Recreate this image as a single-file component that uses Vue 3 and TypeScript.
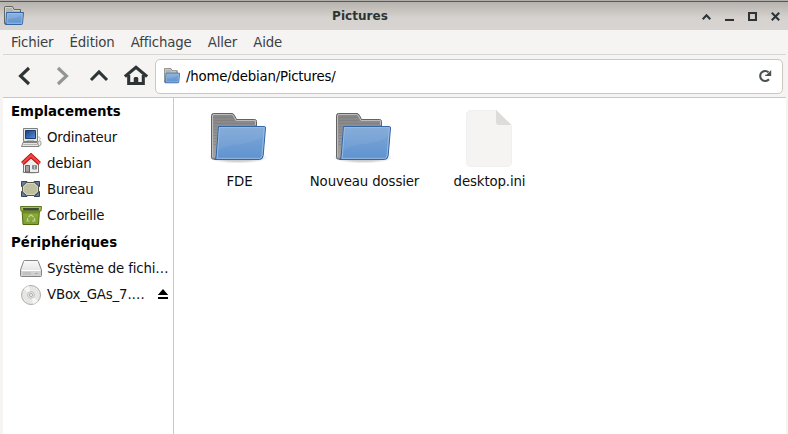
<script setup lang="ts">
interface Place {
  label: string
  icon: string
  eject?: boolean
}

const menus: string[] = ['Fichier', 'Édition', 'Affichage', 'Aller', 'Aide']

const groups: { title: string; places: Place[] }[] = [
  {
    title: 'Emplacements',
    places: [
      { label: 'Ordinateur', icon: 'computer' },
      { label: 'debian', icon: 'home' },
      { label: 'Bureau', icon: 'desktop' },
      { label: 'Corbeille', icon: 'trash' },
    ],
  },
  {
    title: 'Périphériques',
    places: [
      { label: 'Système de fichi…', icon: 'drive' },
      { label: 'VBox_GAs_7.…', icon: 'disc', eject: true },
    ],
  },
]

const files: { name: string; kind: 'folder' | 'text' }[] = [
  { name: 'FDE', kind: 'folder' },
  { name: 'Nouveau dossier', kind: 'folder' },
  { name: 'desktop.ini', kind: 'text' },
]
</script>

<template>
  <div class="window">
    <svg class="defs" width="0" height="0" aria-hidden="true">
      <defs>
        <linearGradient id="blue" x1="0" y1="0" x2="0" y2="1">
          <stop offset="0" stop-color="#7fa8d8" />
          <stop offset="1" stop-color="#5f93cf" />
        </linearGradient>
        <linearGradient id="grey" x1="0" y1="0" x2="0" y2="1">
          <stop offset="0" stop-color="#858585" />
          <stop offset="1" stop-color="#a2a2a2" />
        </linearGradient>
        <linearGradient id="screen" x1="0" y1="0" x2="1" y2="1">
          <stop offset="0" stop-color="#153e84" />
          <stop offset="1" stop-color="#5c8fd6" />
        </linearGradient>
        <linearGradient id="green" x1="0" y1="0" x2="0" y2="1">
          <stop offset="0" stop-color="#8fae35" />
          <stop offset="1" stop-color="#7f9f38" />
        </linearGradient>
        <linearGradient id="steel" x1="0" y1="0" x2="0" y2="1">
          <stop offset="0" stop-color="#fafafa" />
          <stop offset="1" stop-color="#dadada" />
        </linearGradient>
        <radialGradient id="shade">
          <stop offset="0.6" stop-color="#000" stop-opacity="0.2" />
          <stop offset="1" stop-color="#000" stop-opacity="0" />
        </radialGradient>
        <symbol id="folder-small" viewBox="0 0 20 20">
          <path d="M.5 17.500V1.500Q.5.500 1.500.500H8.500L10 3.500H16.500V7V17.500Z" fill="#b3b3b1" stroke="#65655f" />
          <path d="M1.500 16V1.500H8L9.500 4.500H15.500" fill="none" stroke="#d2d2cf" />
          <path d="M2.500 6.500H19.500L18.500 17.500Q18.500 18.500 17.500 18.500H1.200Q2 18 2 17Z" fill="url(#blue)" stroke="#3465a4" />
          <path d="M3.500 7.500H18.400L17.600 17.300H2.900Z" fill="none" stroke="#a8c8ea" stroke-opacity=".65" />
          <path d="M4 13Q10 13 18 9V8H4Z" fill="#fff" opacity=".12" />
        </symbol>
      </defs>
    </svg>

    <header class="titlebar">
      <svg class="app-icon" viewBox="0 0 20 20"><use href="#folder-small" /></svg>
      <span class="title">Pictures</span>
      <div class="controls">
        <svg viewBox="0 0 9 9"><path d="M.7 7.200 4.500 3.200 8.300 7.200" /></svg>
        <svg viewBox="0 0 9 9"><path d="M0 8H9" /></svg>
        <svg viewBox="0 0 9 9"><path d="M1 1H8V8H1Z" /></svg>
        <svg viewBox="0 0 9 9"><path d="M.8.8 8.200 8.200M8.200.8.8 8.200" /></svg>
      </div>
    </header>

    <nav class="menubar">
      <span v-for="menu in menus" :key="menu">{{ menu }}</span>
    </nav>

    <div class="toolbar">
      <div class="nav">
        <svg class="back" viewBox="0 0 24 24"><path d="M16 4 7.500 12 16 20" /></svg>
        <svg class="forward" viewBox="0 0 24 24"><path d="M8 4 16.500 12 8 20" /></svg>
        <svg class="up" viewBox="0 0 24 24"><path d="M4 16 12 8 20 16" /></svg>
        <svg class="house" viewBox="0 0 24 24">
          <path d="M.9 12.500 12 3.200 23.100 12.500" />
          <path d="M4.700 11V19.500H19.300V11" />
          <path class="door" d="M9.700 20V14.500Q9.700 13 11 13H13Q14.300 13 14.300 14.500V20Z" />
        </svg>
      </div>
      <div class="address">
        <svg class="address-icon" viewBox="0 0 20 20"><use href="#folder-small" /></svg>
        <span class="path">/home/debian/Pictures/</span>
        <svg class="reload" viewBox="0 0 14 14">
          <path d="M11 10.200A5 5 0 1 1 10.500 3.200" fill="none" stroke="#4b5052" stroke-width="2.100" />
          <path d="M13.200 1V7H7.200V5.800H8.500Z" fill="#4b5052" />
        </svg>
      </div>
    </div>

    <div class="content">
      <aside class="sidebar">
        <section v-for="group in groups" :key="group.title">
          <h2>{{ group.title }}</h2>
          <div v-for="place in group.places" :key="place.label" class="place">
            <svg v-if="place.icon === 'computer'" class="place-icon" viewBox="0 0 22 22">
              <path d="M3 16.500H17.500L19 20.500H1.500Z" fill="#e7e7e2" stroke="#85857f" />
              <path d="M3.500 18.500H17" stroke="#aaa" stroke-width=".8" />
              <path d="M3.500 2.500H17.500V15.500H3.500Z" fill="#e6e6e0" stroke="#80807b" />
              <path d="M5.500 4.500H15.500V12.500H5.500Z" fill="url(#screen)" stroke="#183b73" />
              <path d="M7 14.500H14" stroke="#bbb" />
              <path d="M18 11Q21.500 11 19.500 14.500" fill="none" stroke="#b0b0aa" />
              <rect x="18" y="15" width="3" height="4.500" rx="1.500" fill="#eee" stroke="#999" />
            </svg>
            <svg v-else-if="place.icon === 'home'" class="place-icon" viewBox="0 0 22 22">
              <ellipse cx="11" cy="20" rx="10" ry="2" fill="url(#shade)" />
              <path d="M3.500 10 11 3.500 18.500 10V20.500H3.500Z" fill="#eeeeec" stroke="#777" />
              <path d="M5.500 13.500H9.500V20H5.500Z" fill="#a2a2a0" stroke="#62625f" />
              <path d="M12.500 13.500H16.500V17H12.500Z" fill="#6b91c5" stroke="#8a8a88" />
              <path d="M14.500 13.500V17" stroke="#ddd" stroke-width=".7" />
              <path d="M2.500 11.500 11 3.700 19.500 11.500" fill="none" stroke="#b50000" stroke-width="4.200" />
              <path d="M2.500 11.300 11 3.500 19.500 11.300" fill="none" stroke="#ef4545" stroke-width="2.400" />
            </svg>
            <svg v-else-if="place.icon === 'desktop'" class="place-icon" viewBox="0 0 22 22">
              <path d="M1.500 3.500H7L5 6.500 1.500 8.500ZM14 3.500H19.500V8.500L17 6.500ZM1.500 13.500 5 16 7 18.500H1.500ZM19.500 13.500V18.500H14L17 16Z" fill="#647da3" stroke="#34445f" />
              <path d="M6.500 4.500H14.500L18.500 8V14L14.500 17.500H6.500L2.500 14V8Z" fill="#bfc0a0" stroke="#55564a" />
              <path d="M7 5.500H14L17.500 8.500V13.500L14 16.500H7L3.500 13.500V8.500Z" fill="none" stroke="#dbdcc6" stroke-width=".8" />
            </svg>
            <svg v-else-if="place.icon === 'trash'" class="place-icon" viewBox="0 0 22 22">
              <path d="M2 5.500H19.500L18.500 20.500H3Z" fill="url(#green)" stroke="#4f6a12" />
              <path d="M3 7.500H18.500V9.500H3Z" fill="#526d1c" opacity=".5" />
              <path d="M.5 2.500H21.500L21 7H1Z" fill="#a6c24d" stroke="#5d781c" />
              <path d="M3 4H19L18.700 6.500H3.300Z" fill="#414a32" />
              <path d="M8.500 13 11 10.700 13.500 13M14.300 14 14.700 17H12M9.500 17H7.200L7.800 14.200" fill="none" stroke="#c3d490" stroke-width="1.200" />
            </svg>
            <svg v-else-if="place.icon === 'drive'" class="place-icon" viewBox="0 0 22 22">
              <path d="M4.500 3.500H17.500Q18 3.500 18.300 4.500L21.500 13V18.500Q21.500 19.500 20.500 19.500H1.500Q.5 19.500.5 18.500V13L3.500 4.500Q3.700 3.500 4.500 3.500Z" fill="url(#steel)" stroke="#858585" />
              <path d="M1 13.500H21V19H1Z" fill="#d1d1d1" />
              <path d="M1.500 13.500H20.500" stroke="#fff" />
              <path d="M4 15V18M6 15V18M8 15V18M10 15V18" stroke="#aaa" stroke-width=".8" />
              <path d="M15 16.500H18" stroke="#aaa" />
            </svg>
            <svg v-else class="place-icon" viewBox="0 0 22 22">
              <circle cx="11" cy="12" r="9.500" fill="#e6e6e5" stroke="#adadaa" />
              <path d="M11 12 4 6A9 9 0 0 1 9 3ZM11 12 18 18A9 9 0 0 1 13 21Z" fill="#f7f7f7" />
              <circle cx="11" cy="12" r="3.400" fill="#e4e4e4" stroke="#c4c4c4" />
              <circle cx="11" cy="12" r="1.500" fill="#fff" stroke="#aaa" />
            </svg>
            <span class="label">{{ place.label }}</span>
            <svg v-if="place.eject" class="eject" viewBox="0 0 12 12">
              <path d="M6 1 11.200 7H.8ZM1 9H11V11H1Z" />
            </svg>
          </div>
        </section>
      </aside>

      <main class="files">
        <div v-for="file in files" :key="file.name" class="file">
          <svg v-if="file.kind === 'folder'" class="file-icon" viewBox="0 0 64 64">
            <ellipse cx="31" cy="53.500" rx="30" ry="6" fill="url(#shade)" />
            <path d="M6 55Q4.500 55 4.500 53.500V11.500Q4.500 9.500 6.500 9.500H25Q26.500 9.500 27.500 11.500L29.500 15.500H47.500Q49.500 15.500 49.500 17.500V55Z" fill="url(#grey)" stroke="#626262" />
            <path d="M5.500 53V12Q5.500 10.500 7 10.500H24.500Q26 10.500 26.500 12L29 16.500H48.500V21" fill="none" stroke="#bdbdbd" />
            <path d="M7 13.500H26M7 16.500H27M7 19.500H47M7 22.500H10M7 25.500H10M7 28.500H10M7 31.500H10M7 34.500H10M7 37.500H9M7 40.500H9" stroke="#7a7a7a" stroke-width=".6" />
            <path d="M11.500 22.500H57.500Q58.600 22.500 58.500 24L56.200 51.500Q55.800 55.500 52.500 55.500H7.500Q9 54.500 9.200 52Z" fill="url(#blue)" stroke="#3465a4" />
            <path d="M12.500 23.700H57.300L55 51.500Q54.600 54.300 52.500 54.300H10.200Z" fill="none" stroke="#a5c4e6" stroke-opacity=".75" />
            <path d="M12 46Q17 42 27 40.500Q43 40 56 33L57 24.500H13Z" fill="#fff" opacity=".06" />
          </svg>
          <svg v-else class="file-icon" viewBox="0 0 64 64">
            <path d="M14 6.500H39.500L54.500 21.500V57.500Q54.500 62.500 50 62.500H14Q9.500 62.500 9.500 57.500V11Q9.500 6.500 14 6.500Z" fill="#f5f4f3" stroke="#f1f0f0" />
            <path d="M39 6 54.500 21H42Q39 21 39 18Z" fill="#dddcda" />
          </svg>
          <span>{{ file.name }}</span>
        </div>
      </main>
    </div>
  </div>
</template>

<style>
body {
  margin: 0;
  overflow: hidden;
}
</style>

<style scoped>
.window {
  width: 788px;
  height: 434px;
  box-sizing: border-box;
  display: flex;
  flex-direction: column;
  background: #f5f4f2;
  font-family: "DejaVu Sans", sans-serif;
  font-size: 13.333px;
  letter-spacing: -0.17px;
  color: #101010;
  overflow: hidden;
}
.defs {
  position: absolute;
}
svg {
  flex: none;
  display: block;
}
.titlebar {
  box-sizing: border-box;
  height: 30px;
  flex: none;
  display: grid;
  grid-template-columns: 116px 1fr 116px;
  align-items: center;
  padding: 2px 4px 0;
  background: linear-gradient(#b0aeaa 0 1px, #5b5a57 1px 2px, #b6b3ae 2px, #d6d2cf 18px, #d8d4d1);
}
.app-icon {
  width: 20px;
  height: 20px;
}
.title {
  grid-column: 2;
  margin-left: -68px;
  text-align: center;
  font-size: 12px;
  font-weight: bold;
  letter-spacing: 0.05px;
  color: #2e3436;
}
.controls {
  display: flex;
  justify-content: flex-end;
  gap: 14px;
  padding: 1px 4px 0 0;
}
.controls svg {
  width: 9px;
  height: 9px;
  fill: none;
  stroke: #2e3436;
  stroke-width: 2.1;
}
.menubar {
  box-sizing: border-box;
  height: 25px;
  flex: none;
  display: flex;
  align-items: center;
  gap: 16.2px;
  margin: 0 2px 0 3px;
  padding-left: 8px;
  border-bottom: 1px solid #d9d7d5;
  color: #3b4143;
}
.toolbar {
  box-sizing: border-box;
  height: 43px;
  flex: none;
  display: flex;
  align-items: center;
  gap: 7px;
  margin: 0 2px 0 3px;
  padding: 0 0 0 10px;
  border-bottom: 1px solid #cdc7c2;
}
.nav {
  display: flex;
  gap: 13px;
}
.nav svg {
  width: 24px;
  height: 24px;
  fill: none;
  stroke: #2e3436;
  stroke-width: 3.1;
}
.nav .forward {
  stroke: #929595;
}
.nav .door {
  fill: #2e3436;
  stroke: none;
}
.address {
  box-sizing: border-box;
  flex: 1;
  height: 35px;
  display: flex;
  align-items: center;
  margin-right: 3px;
  padding: 0 10px 0 8px;
  border: 1px solid #cdc7c2;
  border-radius: 5px;
  background: #fff;
  color: #000;
}
.address-icon {
  width: 16px;
  height: 16px;
}
.path {
  flex: 1;
  margin-left: 6px;
  letter-spacing: -0.2px;
}
.reload {
  width: 14px;
  height: 14px;
}
.content {
  flex: 1;
  display: flex;
  margin: 0 2px 0 3px;
  background: #fff;
}
.sidebar {
  box-sizing: border-box;
  width: 171px;
  flex: none;
  border-right: 1px solid #cdc7c2;
}
h2 {
  margin: 0;
  padding-left: 8px;
  height: 27px;
  line-height: 29px;
  font-size: 13.333px;
  font-weight: bold;
  letter-spacing: 0.08px;
  color: #000;
}
section:first-child h2 {
  height: 26px;
  line-height: 27px;
  letter-spacing: 0;
}
.place {
  height: 26px;
  display: flex;
  align-items: center;
  padding: 0 4px 0 17px;
}
.place-icon {
  width: 22px;
  height: 22px;
  margin-right: 5px;
}
.label {
  flex: 1;
  white-space: nowrap;
}
.eject {
  width: 12px;
  height: 12px;
}
.files {
  flex: 1;
  display: flex;
  align-items: flex-start;
  padding: 6px 0 0 3px;
}
.file {
  width: 125px;
  display: flex;
  flex-direction: column;
  align-items: center;
  gap: 6px;
  line-height: 16px;
  letter-spacing: -0.13px;
  white-space: nowrap;
}
.file-icon {
  width: 64px;
  height: 64px;
  margin-right: 1px;
}
</style>
